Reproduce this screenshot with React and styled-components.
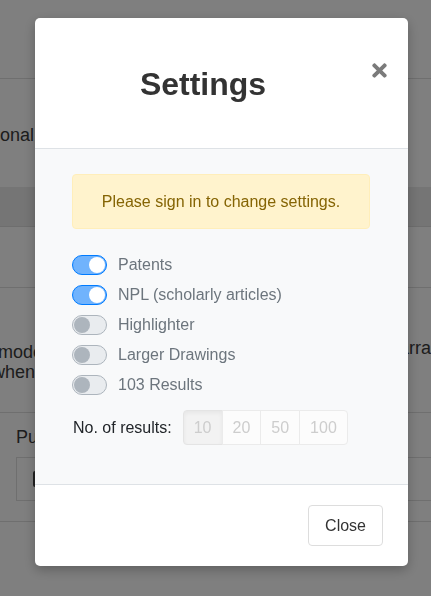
import React from "react";
import styled, { createGlobalStyle, css } from "styled-components";
import { FaTimes } from "react-icons/fa";

const GlobalStyle = createGlobalStyle`
  html, body { margin: 0; padding: 0; background: #fff; }
  body { font-family: "Liberation Sans", Arial, sans-serif; color: #333; overflow: hidden; }
  * { box-sizing: border-box; }
`;

/* ---------- background page ---------- */
const Page = styled.div`
  width: 431px;
  height: 596px;
  overflow: hidden;
  display: flex;
  flex-direction: column;
`;

const TopBar = styled.div`
  height: 79px;
  border-bottom: 1px solid #dedede;
`;

const IntroRow = styled.div`
  height: 108px;
  display: flex;
  align-items: center;
  font-size: 18px;
  color: #3a3a3a;
  padding-top: 4px;
`;

const TableHead = styled.div`
  height: 40px;
  background: #ebebeb;
  border-bottom: 1px solid #dcdcdc;
`;

const TableRow = styled.div`
  height: ${(p) => p.$h}px;
  border-bottom: 1px solid #dedede;
  display: flex;
  justify-content: space-between;
  align-items: ${(p) => p.$align || "center"};
  font-size: 18px;
  color: #3a3a3a;
  line-height: 20px;
`;

const Lines = styled.div`
  display: flex;
  flex-direction: column;
  margin-left: ${(p) => p.$ml || 0}px;
  padding-top: 4px;
`;

const PubBlock = styled.div`
  height: 109px;
  border-bottom: 1px solid #dedede;
  padding: 14px 0 0 16px;
  font-size: 18px;
  color: #3a3a3a;
  display: flex;
  flex-direction: column;
  gap: 9px;
`;

const PubBox = styled.div`
  height: 44px;
  margin-right: -20px;
  border: 1px solid #dedede;
  display: flex;
  align-items: center;
  padding-left: 16px;
`;

const CalIcon = styled.div`
  width: 12px;
  height: 16px;
  background: #444;
  border-radius: 2px;
`;

/* ---------- overlay & modal ---------- */
const Backdrop = styled.div`
  position: fixed;
  inset: 0;
  background: rgba(0, 0, 0, 0.5);
`;

const Modal = styled.div`
  position: relative;
  margin: 18px 0 0 35px;
  width: 373px;
  background: #fff;
  border-radius: 5px;
  overflow: hidden;
  box-shadow: 0 4px 12px rgba(0, 0, 0, 0.25);
`;

const Header = styled.div`
  padding: 48px 53px 45px 16px;
  border-bottom: 1px solid #dee2e6;
  text-align: center;
`;

const Title = styled.h1`
  margin: 0;
  font-size: 32px;
  line-height: 37px;
  font-weight: 700;
  color: #333;
`;

const CloseX = styled.button`
  position: absolute;
  top: 42px;
  right: 18px;
  padding: 0;
  border: 0;
  background: none;
  color: #7b7b7b;
  display: flex;
  font-size: 21px;
  cursor: pointer;
`;

const Body = styled.div`
  background: #f8f9fa;
  padding: 25px 38px 39px 37px;
  border-bottom: 1px solid #dee2e6;
`;

const Alert = styled.div`
  height: 55px;
  border: 1px solid #ffeeba;
  border-radius: 4px;
  background: #fff3cd;
  color: #856404;
  font-size: 16px;
  display: flex;
  align-items: center;
  justify-content: center;
  margin-bottom: 21px;
`;

const SwitchRow = styled.label`
  height: 30px;
  display: flex;
  align-items: center;
  gap: 11px;
  font-size: 16px;
  color: #6c757d;
`;

const Track = styled.span`
  position: relative;
  width: 35px;
  height: 20px;
  border-radius: 10px;
  border: 1px solid ${(p) => (p.$on ? "#007bff" : "#adb5bd")};
  background: ${(p) => (p.$on ? "#70b3fd" : "#e9ecef")};
  flex-shrink: 0;
`;

const Knob = styled.span`
  position: absolute;
  top: 1px;
  left: ${(p) => (p.$on ? "16px" : "1px")};
  width: 16px;
  height: 16px;
  border-radius: 50%;
  background: ${(p) => (p.$on ? "#fff" : "#adb5bd")};
`;

const ResultsRow = styled.div`
  margin-top: 10px;
  display: flex;
  align-items: center;
  gap: 11px;
  font-size: 16px;
  color: #212529;
  padding-left: 1px;
`;

const Group = styled.div`
  display: flex;
`;

const GroupBtn = styled.button`
  height: 35px;
  padding: 0 10px;
  font-family: inherit;
  font-size: 16px;
  color: #cdcdcd;
  background: #fcfcfc;
  border: 1px solid #ebebeb;
  margin-left: -1px;
  &:first-child {
    margin-left: 0;
    border-radius: 4px 0 0 4px;
  }
  &:last-child {
    border-radius: 0 4px 4px 0;
  }
  ${(p) =>
    p.$active &&
    css`
      background: #f2f2f2;
      box-shadow: inset 0 2px 4px rgba(0, 0, 0, 0.05);
      border-color: #e4e4e4;
    `}
`;

const Footer = styled.div`
  padding: 20px 25px 20px;
  display: flex;
  justify-content: flex-end;
`;

const CloseButton = styled.button`
  height: 41px;
  padding: 0 16px;
  font-family: inherit;
  font-size: 16px;
  color: #333;
  background: #fff;
  border: 1px solid #dddddd;
  border-radius: 4px;
`;

const switches = [
  { label: "Patents", on: true },
  { label: "NPL (scholarly articles)", on: true },
  { label: "Highlighter", on: false },
  { label: "Larger Drawings", on: false },
  { label: "103 Results", on: false },
];

export default function App() {
  return (
    <>
      <GlobalStyle />
      <Page>
        <TopBar />
        <IntroRow>onal</IntroRow>
        <TableHead />
        <TableRow $h={61} />
        <TableRow $h={125} $align="flex-start">
          <Lines $ml={-2}>
            <span style={{ marginTop: 50 }}>model</span>
            <span style={{ marginLeft: -6 }}>when</span>
          </Lines>
          <Lines>
            <span style={{ marginTop: 46, marginRight: -30 }}>arrange</span>
          </Lines>
        </TableRow>
        <PubBlock>
          <span>Pub</span>
          <PubBox>
            <CalIcon />
          </PubBox>
        </PubBlock>
      </Page>
      <Backdrop>
        <Modal>
          <Header>
            <Title>Settings</Title>
            <CloseX aria-label="close">
              <FaTimes />
            </CloseX>
          </Header>
          <Body>
            <Alert>Please sign in to change settings.</Alert>
            {switches.map((s) => (
              <SwitchRow key={s.label}>
                <Track $on={s.on}>
                  <Knob $on={s.on} />
                </Track>
                {s.label}
              </SwitchRow>
            ))}
            <ResultsRow>
              No. of results:
              <Group>
                <GroupBtn $active>10</GroupBtn>
                <GroupBtn>20</GroupBtn>
                <GroupBtn>50</GroupBtn>
                <GroupBtn>100</GroupBtn>
              </Group>
            </ResultsRow>
          </Body>
          <Footer>
            <CloseButton>Close</CloseButton>
          </Footer>
        </Modal>
      </Backdrop>
    </>
  );
}
